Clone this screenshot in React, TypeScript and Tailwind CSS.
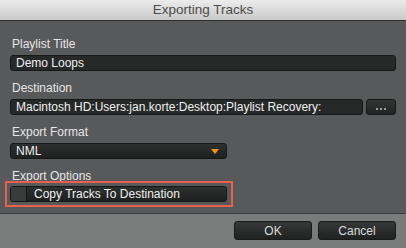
import React from "react";

const Label = ({ children }: { children: React.ReactNode }) => (
  <div className="h-[16px] leading-[16px] text-[12px] text-[#e6e6e6] px-[2px]">
    {children}
  </div>
);

const Field = ({ children, className = "" }: { children: React.ReactNode; className?: string }) => (
  <div
    className={`h-[16px] flex items-center rounded-[3px] border border-[#161717] bg-[#272929] px-[5px] text-[12px] leading-none text-[#f0f0f0] ${className}`}
  >
    {children}
  </div>
);

export default function App() {
  return (
    <div
      className="w-[406px] h-[248px] flex flex-col overflow-hidden"
      style={{ fontFamily: '"Liberation Sans", Arial, sans-serif' }}
    >
      {/* Title bar */}
      <div className="h-[21px] shrink-0 flex items-center justify-center bg-gradient-to-b from-[#ececec] to-[#c9c9c9] border-b border-[#2e2f2f] text-[13.5px] text-[#4b4b4b]">
        Exporting Tracks
      </div>

      {/* Body */}
      <div className="flex-1 bg-[#58595a] px-[10px] pt-[15px] flex flex-col">
        <Label>Playlist Title</Label>
        <Field className="mt-[3px]">Demo Loops</Field>

        <div className="mt-[9px]">
          <Label>Destination</Label>
        </div>
        <div className="mt-[3px] flex gap-[3px]">
          <Field className="flex-1">Macintosh HD:Users:jan.korte:Desktop:Playlist Recovery:</Field>
          <button className="w-[30px] h-[16px] rounded-[3px] border border-[#161717] bg-gradient-to-b from-[#343636] to-[#222424] flex items-center justify-center gap-[2px] pt-[3px]">
            <span className="w-[2px] h-[2px] bg-[#9a9a9a]" />
            <span className="w-[2px] h-[2px] bg-[#9a9a9a]" />
            <span className="w-[2px] h-[2px] bg-[#9a9a9a]" />
          </button>
        </div>

        <div className="mt-[9px]">
          <Label>Export Format</Label>
        </div>
        <div className="mt-[3px] w-[217px] h-[16px] flex items-center justify-between rounded-[3px] border border-[#161717] bg-gradient-to-b from-[#2e3030] to-[#1f2121] pl-[5px] pr-[7px] text-[12px] text-[#f0f0f0]">
          <span>NML</span>
          <svg width="8" height="5" viewBox="0 0 8 5">
            <path d="M0 0 H8 L4 5 Z" fill="#f0961e" />
          </svg>
        </div>

        <div className="mt-[9px]">
          <Label>Export Options</Label>
        </div>
        {/* highlight box around the checkbox */}
        <div className="-mt-[3px] -ml-[5px] w-[228px] border-2 border-[#ea5f4e] p-[3px]">
          <div className="w-[217px] h-[16px] flex rounded-[3px] border border-[#161717] bg-gradient-to-b from-[#2e3030] to-[#1f2121]">
            <div className="w-[16px] h-full bg-[#3a3c3c] border-r border-[#161717] rounded-l-[2px]" />
            <div className="flex items-center pl-[7px] text-[12px] text-[#f0f0f0]">
              Copy Tracks To Destination
            </div>
          </div>
        </div>
      </div>

      {/* Footer */}
      <div className="h-[35px] shrink-0 bg-[#7a7c7b] border-t border-[#3c3d3d] flex items-center justify-end gap-[6px] px-[10px] pb-[1px]">
        <button className="w-[78px] h-[19px] rounded-[3px] border border-[#1a1b1b] bg-gradient-to-b from-[#373939] to-[#202222] text-[12px] text-[#dcdcdc]">
          OK
        </button>
        <button className="w-[78px] h-[19px] rounded-[3px] border border-[#1a1b1b] bg-gradient-to-b from-[#373939] to-[#202222] text-[12px] text-[#dcdcdc]">
          Cancel
        </button>
      </div>
    </div>
  );
}
